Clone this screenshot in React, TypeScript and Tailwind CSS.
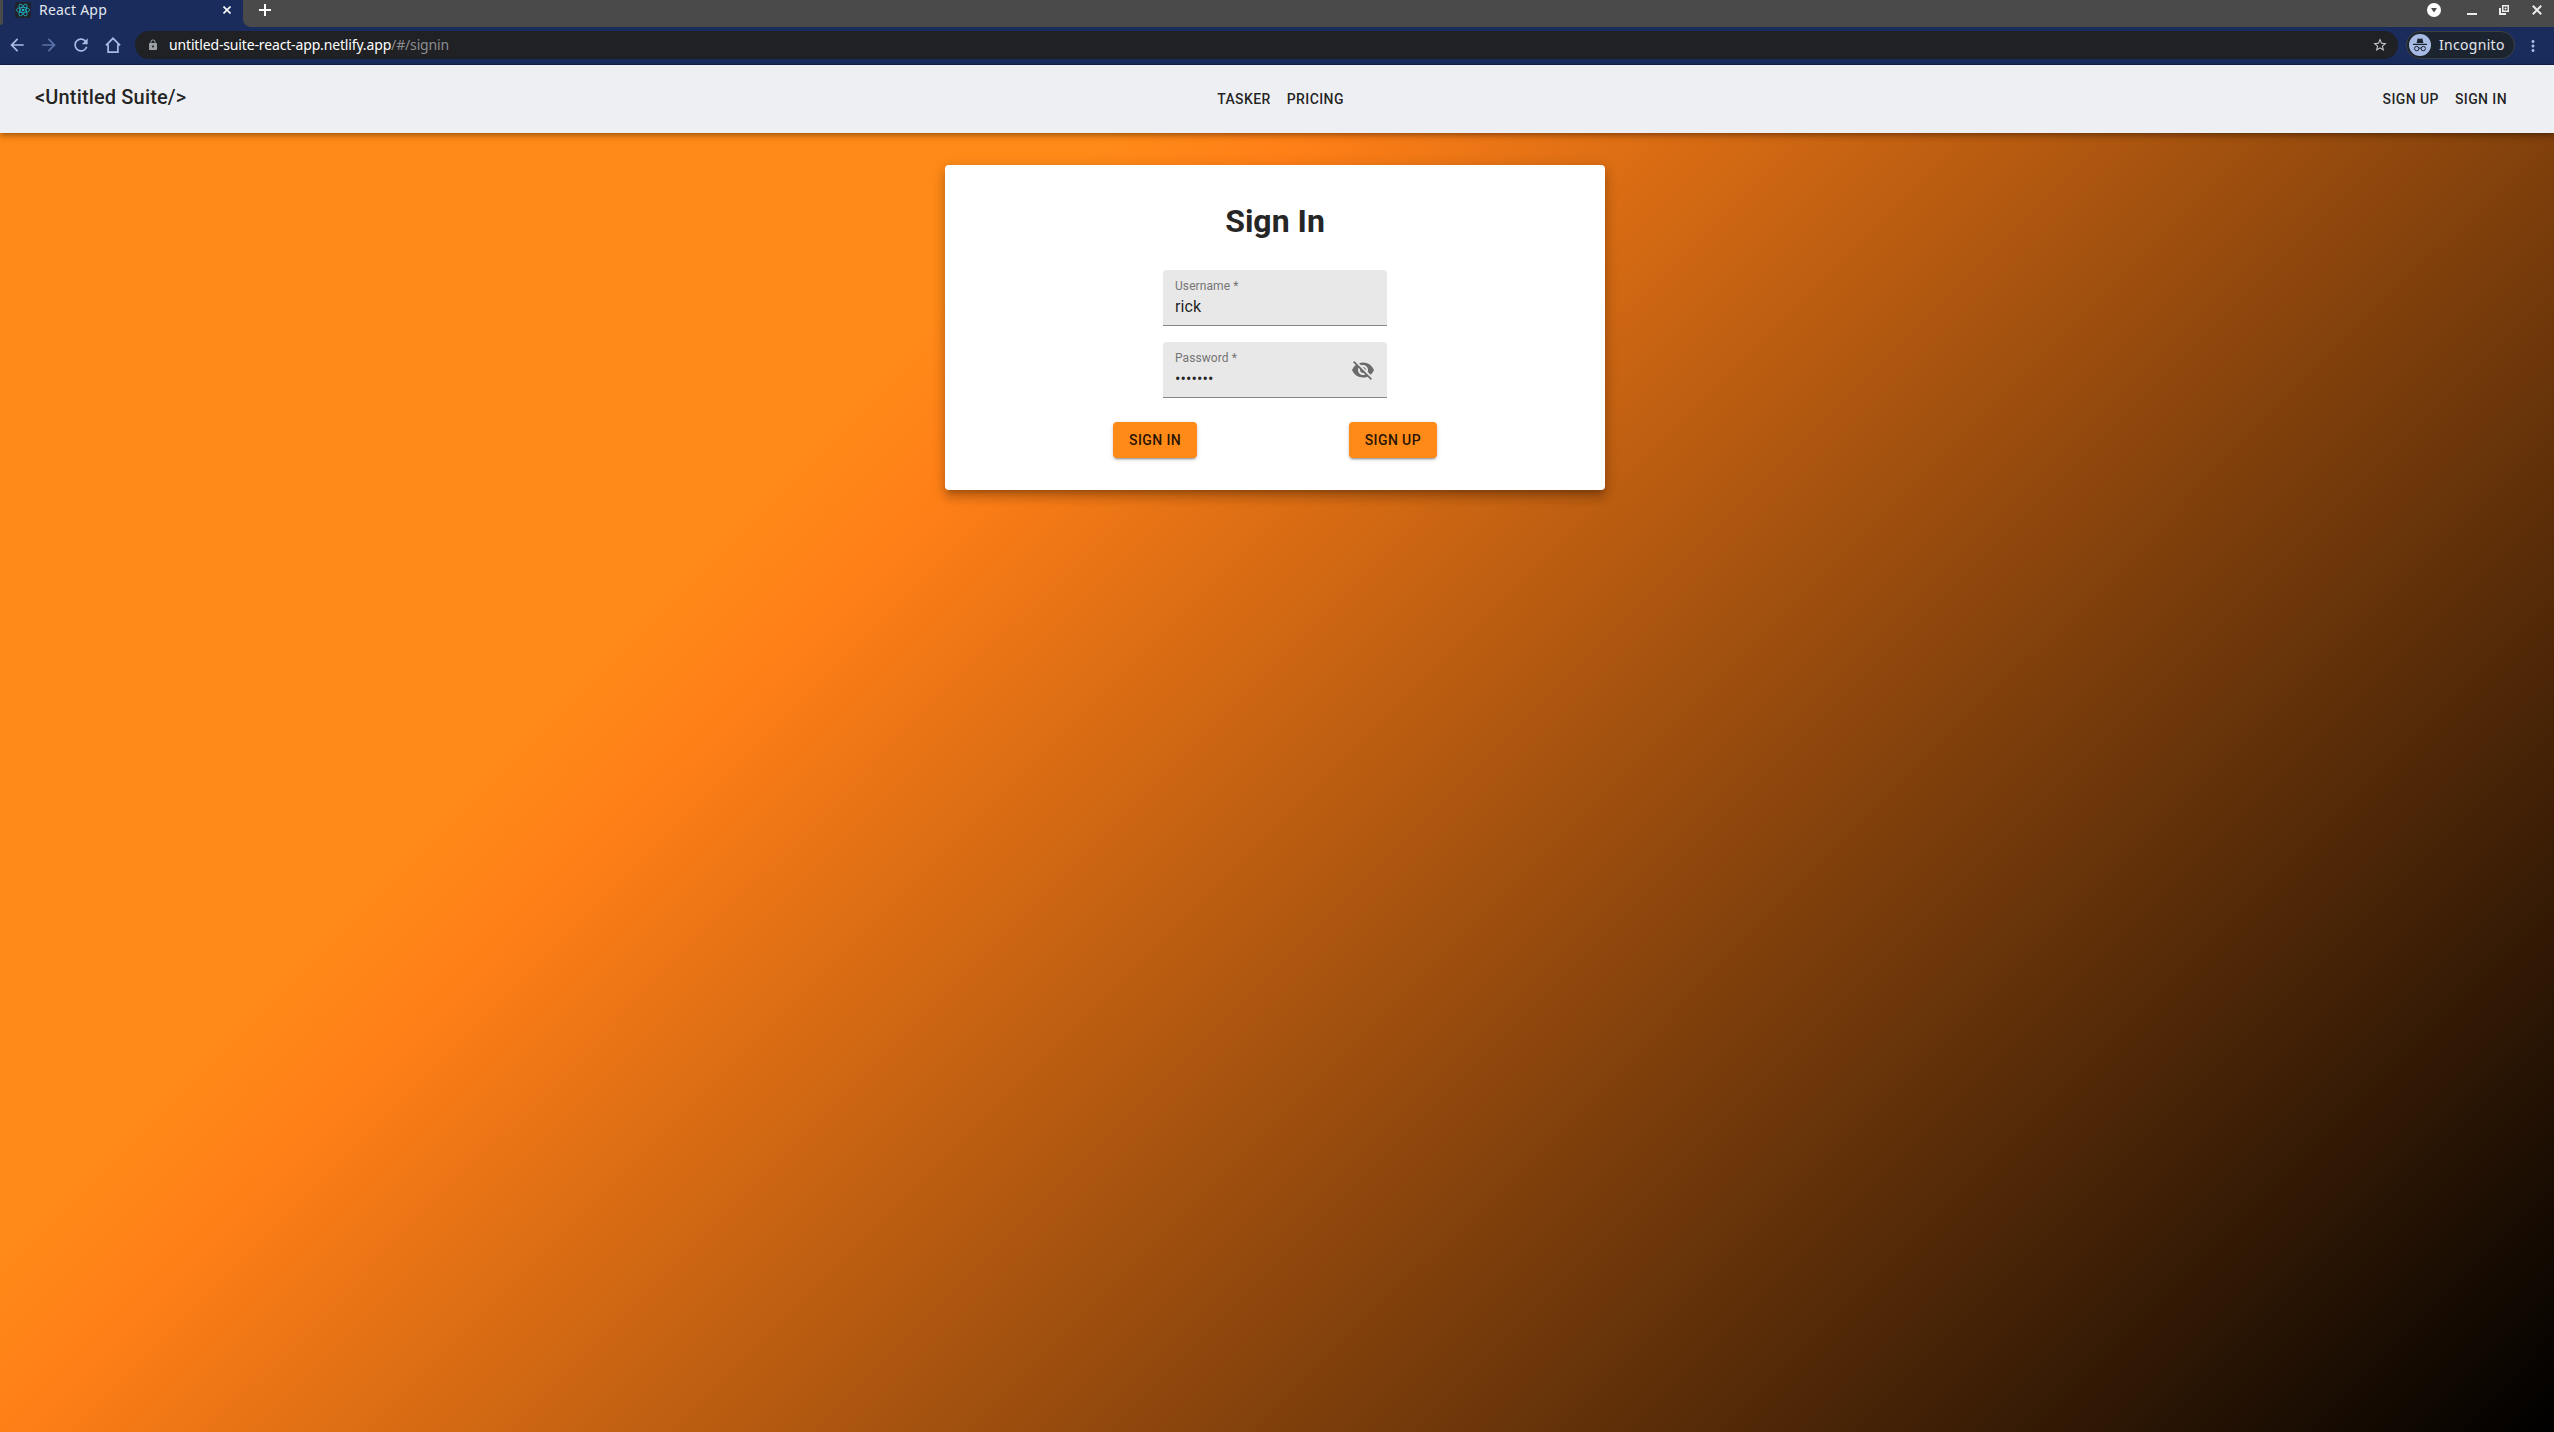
import React from "react";
import {
  MdArrowBack,
  MdArrowForward,
  MdLock,
  MdMoreVert,
  MdRefresh,
  MdStarBorder,
  MdVisibilityOff,
} from "react-icons/md";

function ReactLogo() {
  return (
    <svg viewBox="0 0 16 16" className="h-4 w-4 rounded-[2px] bg-[#20232a]" fill="none" stroke="#22b5c8" strokeWidth="0.8">
      <ellipse cx="8" cy="8" rx="6.6" ry="2.6" />
      <ellipse cx="8" cy="8" rx="6.6" ry="2.6" transform="rotate(60 8 8)" />
      <ellipse cx="8" cy="8" rx="6.6" ry="2.6" transform="rotate(120 8 8)" />
      <circle cx="8" cy="8" r="1.3" fill="#22b5c8" stroke="none" />
    </svg>
  );
}

function TabStrip() {
  return (
    <div className="flex h-[27px] bg-[#4a4a4a] text-white">
      <div className="w-[3px] bg-[#192c5c]">
        <div className="h-[25px] w-[3px] rounded-br-[3px] bg-[#4a4a4a]" />
      </div>
      <div className="flex h-[27px] w-[240px] items-start bg-[#192c5c] pl-3 pt-[2px]">
        <ReactLogo />
        <span className="ml-2 -mt-[1px] w-[184px] text-[14px] leading-[18px] tracking-[0.22px] text-[#e3e7f0]">React App</span>
        <svg viewBox="0 0 8 8" className="mt-1 h-2 w-2" stroke="#fff" strokeWidth="1.6">
          <path d="M.5.5l7 7M7.5.5l-7 7" />
        </svg>
      </div>
      <div className="w-2 bg-[#192c5c]">
        <div className="h-[27px] w-2 rounded-bl-[8px] bg-[#4a4a4a]" />
      </div>
      <svg viewBox="0 0 12 12" className="ml-2 mt-1 h-3 w-3" stroke="#fff" strokeWidth="2">
        <path d="M6 0v12M0 6h12" />
      </svg>
      <div className="ml-auto flex pr-3">
        <svg viewBox="0 0 14 14" className="mr-[26px] mt-[3px] h-[14px] w-[14px]">
          <circle cx="7" cy="7" r="7" fill="#fff" />
          <path d="M4 5h6l-3 4.5z" fill="#4a4a4a" />
        </svg>
        <div className="mr-[22px] mt-[13px] h-[2px] w-[10px] bg-[#ececec]" />
        <svg viewBox="0 0 10 10" className="mr-[23px] mt-[5px] h-[10px] w-[10px]" fill="none" stroke="#ececec">
          <path d="M3.75.75h5.5v5.5h-5.5z" strokeWidth="1.5" />
          <path d="M1 3v6h6" strokeWidth="2" />
          <path d="M6 3h1v1H6z" strokeWidth="1" />
        </svg>
        <svg viewBox="0 0 10 10" className="mt-[5px] h-[10px] w-[10px]" stroke="#ececec" strokeWidth="2">
          <path d="M.8.8l8.4 8.4M9.2.8L.8 9.2" />
        </svg>
      </div>
    </div>
  );
}

function AddressBar() {
  return (
    <div className="flex h-[38px] items-start border-b border-[#12234a] bg-[#192c5c] pt-1 text-[#a8bbe4]">
      <div className="flex h-7 w-[135px] items-center pl-[7px]">
        <MdArrowBack size={20} />
        <MdArrowForward size={20} className="ml-3 text-[#5b73a9]" />
        <MdRefresh size={20} className="ml-3" />
        <svg viewBox="0 0 16 16" className="ml-[14px] h-4 w-4" fill="none" stroke="currentColor" strokeWidth="1.7">
          <path d="M.9 8.4L8 1.3l7.1 7.1M3.1 7.2v7.9h9.8V7.2" />
        </svg>
      </div>
      <div className="flex h-7 w-[2263px] items-center rounded-full bg-[#202124] pl-3 pr-[10px]">
        <MdLock size={12} className="text-[#9aa0a6]" />
        <span className="ml-[10px] whitespace-nowrap text-[14px] leading-5 tracking-[-0.15px] text-white">
          untitled-suite-react-app.netlify.app<span className="text-[#8b8d90]">/#/signin</span>
        </span>
        <MdStarBorder size={16} className="ml-auto text-[#c8cace]" />
      </div>
      <div className="ml-2 flex h-7 w-[109px] items-center rounded-full border border-[#3c4043] bg-[#1c242f] pl-[2px]">
        <svg viewBox="0 0 22 22" className="h-[22px] w-[22px]">
          <circle cx="11" cy="11" r="11" fill="#a8bbe4" />
          <path d="M7.6 9l1-4.6h1.3l1.1.5 1.1-.5h1.3l1 4.6zM4 9.8h14v1.1H4z" fill="#1c242f" />
          <g fill="none" stroke="#1c242f">
            <circle cx="7.7" cy="14.6" r="2.2" />
            <circle cx="14.3" cy="14.6" r="2.2" />
            <path d="M9.9 14.3q1.1-.7 2.2 0" />
          </g>
        </svg>
        <span className="ml-2 text-[14px] leading-5 tracking-[0.3px] text-[#e3e7f0]">Incognito</span>
      </div>
      <MdMoreVert size={18} className="ml-[9px] mt-[6px]" />
    </div>
  );
}

function NavLink({ children }: { children: React.ReactNode }) {
  return (
    <a className="px-2 text-[14px] font-medium leading-6 tracking-[0.4px] text-black/87">{children}</a>
  );
}

function SiteHeader() {
  return (
    <header className="relative z-10 grid h-[68px] grid-cols-[1fr_auto_1fr] items-center bg-[#eeeff3] pl-[35px] pr-[39px] shadow-[0px_2px_4px_-1px_rgba(0,0,0,0.2),0px_4px_5px_0px_rgba(0,0,0,0.14),0px_1px_10px_0px_rgba(0,0,0,0.12)]">
      <div className="pb-[5px] text-[20px] font-medium leading-8 tracking-[0.15px] text-black/87">&lt;Untitled Suite/&gt;</div>
      <nav className="ml-[11px] flex">
        <NavLink>TASKER</NavLink>
        <NavLink>PRICING</NavLink>
      </nav>
      <nav className="flex justify-end">
        <NavLink>SIGN UP</NavLink>
        <NavLink>SIGN IN</NavLink>
      </nav>
    </header>
  );
}

function Field({ label, type, value, children }: { label: string; type: string; value: string; children?: React.ReactNode }) {
  return (
    <label className="flex h-14 w-56 items-center rounded-t-[4px] border-b border-[#868686] bg-[#e8e8e8] px-3">
      <span className="flex h-full min-w-0 flex-1 flex-col">
        <span className="mt-2 text-[12px] leading-4 tracking-[0.08px] text-[#757575]">{label} *</span>
        <input type={type} defaultValue={value} className="mt-[3px] h-[19px] w-full bg-transparent text-[16px] tracking-[0.1px] text-black/87 outline-none" />
      </span>
      {children}
    </label>
  );
}

function ActionButton({ children }: { children: React.ReactNode }) {
  return (
    <button className="h-9 rounded-[4px] bg-[#ff8a18] px-4 text-[14px] font-medium tracking-[0.4px] text-black/87 shadow-[0px_3px_1px_-2px_rgba(0,0,0,0.2),0px_2px_2px_0px_rgba(0,0,0,0.14),0px_1px_5px_0px_rgba(0,0,0,0.12)]">
      {children}
    </button>
  );
}

export default function App() {
  return (
    <div className="flex h-[1432px] w-[2554px] flex-col overflow-hidden">
      <div className="font-['Noto_Sans',sans-serif]">
        <TabStrip />
        <AddressBar />
      </div>
      <div className="flex-1 bg-[linear-gradient(135deg,#ff8a18_30%,#ff7f17_35%,#000_100%)] font-['Roboto',sans-serif]">
        <SiteHeader />
        <main className="flex justify-center pr-1 pt-8">
          <section className="flex h-[325px] w-[660px] flex-col items-center rounded-[4px] bg-white shadow-[0px_5px_5px_-3px_rgba(0,0,0,0.2),0px_8px_10px_1px_rgba(0,0,0,0.14),0px_3px_14px_2px_rgba(0,0,0,0.12)]">
            <h1 className="mt-8 text-[32px] font-bold leading-[48px] text-[#262626]">Sign In</h1>
            <div className="mt-[25px] flex flex-col gap-4">
              <Field label="Username" type="text" value="rick" />
              <Field label="Password" type="password" value="xxxxxxx">
                <MdVisibilityOff size={24} className="text-[#6b6b6b]" />
              </Field>
            </div>
            <div className="mt-6 flex w-[324px] justify-between">
              <ActionButton>SIGN IN</ActionButton>
              <ActionButton>SIGN UP</ActionButton>
            </div>
          </section>
        </main>
      </div>
    </div>
  );
}
